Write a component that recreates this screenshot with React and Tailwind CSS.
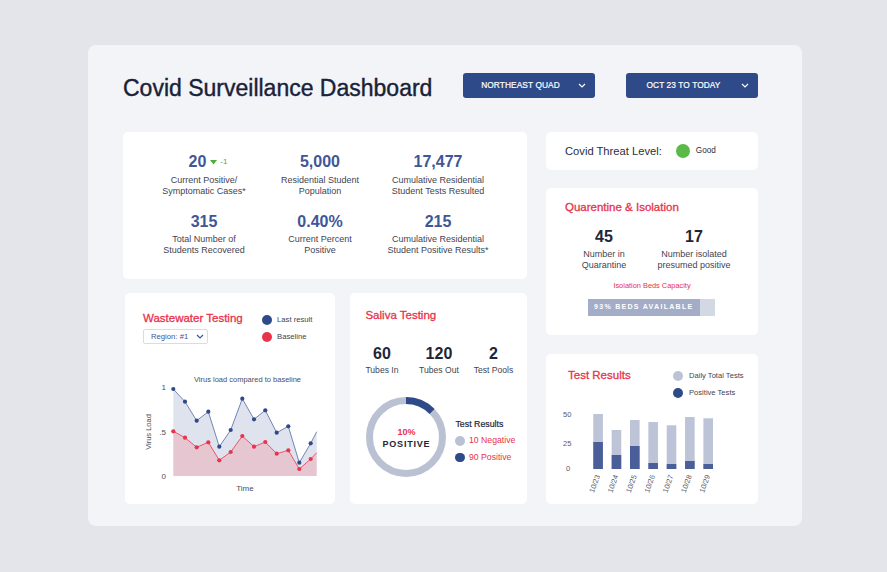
import React from 'react';

const BLUE = [
  [173.3, 389], [185, 401.7], [196.7, 420.7], [208.3, 411.7], [219.3, 446.7], [230.7, 430],
  [242.3, 398.7], [254, 419.3], [265.3, 410.3], [276.7, 432.7], [288.3, 426.3], [299.3, 462.7], [310.7, 443.3],
];
const RED = [
  [173.3, 431.3], [185, 437.7], [196.7, 447.3], [208.3, 442.3], [219.3, 460.3], [230.7, 452],
  [242.3, 436], [254, 446.7], [265.3, 442], [276.7, 453.7], [288.3, 450.3], [299.3, 469], [310.7, 459],
];
const BLUE_LINE = [...BLUE, [316.7, 431.7]];
const RED_LINE = [...RED, [316.7, 452.7]];

const BARS = [
  { d: '10/23', total: 414, pos: 442 },
  { d: '10/24', total: 430, pos: 455 },
  { d: '10/25', total: 420, pos: 446 },
  { d: '10/26', total: 422, pos: 463 },
  { d: '10/27', total: 425.3, pos: 464 },
  { d: '10/28', total: 417, pos: 461 },
  { d: '10/29', total: 418.3, pos: 464 },
];

const toPts = (a) => a.map((p) => p.join(',')).join(' ');

function Chevron({ className }) {
  return (
    <svg width="8" height="5" viewBox="0 0 8 5" className={className}>
      <polyline points="1,1 4,4 7,1" fill="none" stroke="currentColor" strokeWidth="1.2" />
    </svg>
  );
}

function SelectButton({ label }) {
  return (
    <div className="w-[132px] h-[25px] bg-[#2f4a89] rounded-[3px] flex items-center pr-[9px] text-white">
      <span className="flex-1 text-center text-[8.3px] tracking-[0.1px] [-webkit-text-stroke:0.2px_white]">{label}</span>
      <Chevron className="text-white" />
    </div>
  );
}

function Stat({ value, label, extra }) {
  return (
    <div className="flex flex-col items-center">
      <div className={`flex items-center h-[20px] ${extra ? 'pl-[8px]' : ''}`}>
        <span className="text-[16px] leading-[20px] font-bold text-[#3f5697]">{value}</span>
        {extra}
      </div>
      <div className="mt-[2.5px] text-[9px] leading-[11px] text-center text-[#3f4451] whitespace-pre-line">{label}</div>
    </div>
  );
}

function Card({ className, children }) {
  return <div className={`bg-white rounded-[5px] ${className}`}>{children}</div>;
}

// red card headings, drawn a touch heavier than regular
const HEAD = 'text-[11.5px] leading-[14px] text-[#e8334c] [-webkit-text-stroke:0.3px_#e8334c]';

function WastewaterChart() {
  const area = toPts([...BLUE_LINE, ...[...RED_LINE].reverse()]);
  const redArea = toPts([...RED_LINE, [316.7, 476], [173.3, 476]]);
  return (
    <svg width="190" height="125" viewBox="140 370 190 125">
      <text x="247.5" y="381.5" textAnchor="middle" fontSize="7.5" fill="#4a4f5c">Virus load compared to baseline</text>
      <polygon points={area} fill="#dfe3ee" />
      <polygon points={redArea} fill="#e6c6d0" />
      <polyline points={toPts(BLUE_LINE)} fill="none" stroke="#5468a3" strokeWidth="0.8" />
      <polyline points={toPts(RED_LINE)} fill="none" stroke="#e8334c" strokeWidth="0.8" />
      {BLUE.map(([x, y], i) => <circle key={'b' + i} cx={x} cy={y} r="2.1" fill="#2f4a89" />)}
      {RED.map(([x, y], i) => <circle key={'r' + i} cx={x} cy={y} r="2.1" fill="#e8334c" />)}
      <text x="166" y="390" textAnchor="end" fontSize="8" fill="#4a4f5c">1</text>
      <text x="166" y="435" textAnchor="end" fontSize="8" fill="#4a4f5c">.5</text>
      <text x="166" y="479" textAnchor="end" fontSize="8" fill="#4a4f5c">0</text>
      <text transform="translate(150.5 432) rotate(-90)" textAnchor="middle" fontSize="7.5" fill="#4a4f5c">Virus Load</text>
      <text x="245" y="491" textAnchor="middle" fontSize="8" fill="#4a4f5c">Time</text>
    </svg>
  );
}

function BarChart() {
  return (
    <svg width="170" height="95" viewBox="555 405 170 95">
      <text x="563" y="417" fontSize="7.5" fill="#55596a">50</text>
      <text x="563" y="445.5" fontSize="7.5" fill="#55596a">25</text>
      <text x="566" y="471" fontSize="7.5" fill="#55596a">0</text>
      {BARS.map((b, i) => {
        const x = 593.3 + i * 18.35;
        const cx = x + 4.8;
        return (
          <g key={b.d}>
            <rect x={x} y={b.total} width="9.6" height={469 - b.total} fill="#bdc4d8" />
            <rect x={x} y={b.pos} width="9.6" height={469 - b.pos} fill="#4a5e99" />
            <text
              x={cx + 2}
              y={476}
              textAnchor="end"
              fontSize="7.3"
              fill="#55596a"
              transform={`rotate(-70 ${cx + 2} 476)`}
            >
              {b.d}
            </text>
          </g>
        );
      })}
    </svg>
  );
}

export default function App() {
  return (
    <div className="w-[887px] h-[572px] bg-[#e4e5eb] pt-[45px] pl-[88px] font-['Liberation_Sans',Arial,sans-serif]">
      <div className="w-[714px] h-[481px] bg-[#f3f4f7] rounded-lg pl-[35px] pt-[28px]">
        {/* Header */}
        <div className="flex items-center h-[25px]">
          <h1 className="w-[340px] mt-[5px] text-[23px] leading-[28px] text-[#1a2238] [-webkit-text-stroke:0.4px_#1a2238]">
            Covid Surveillance Dashboard
          </h1>
          <SelectButton label="NORTHEAST QUAD" />
          <div className="w-[31px]" />
          <SelectButton label="OCT 23 TO TODAY" />
        </div>

        <div className="flex gap-[19px] mt-[34px]">
          {/* Left column */}
          <div className="w-[404px] flex flex-col gap-[14px]">
            <Card className="h-[147px] pt-[20px] pl-[24px]">
              <div className="grid grid-cols-[114px_118px_118px] gap-y-[15px]">
                <Stat
                  value="20"
                  label={'Current Positive/\nSymptomatic Cases*'}
                  extra={
                    <span className="flex items-center ml-[4px]">
                      <svg width="7" height="5" viewBox="0 0 7 5"><polygon points="0,0 7,0 3.5,4.5" fill="#4cae3c" /></svg>
                      <span className="ml-[3px] text-[8px] text-[#4cae3c]">-1</span>
                    </span>
                  }
                />
                <Stat value="5,000" label={'Residential Student\nPopulation'} />
                <Stat value="17,477" label={'Cumulative Residential\nStudent Tests Resulted'} />
                <Stat value="315" label={'Total Number of\nStudents Recovered'} />
                <Stat value="0.40%" label={'Current Percent\nPositive'} />
                <Stat value="215" label={'Cumulative Residential\nStudent Positive Results*'} />
              </div>
            </Card>

            <div className="flex gap-[15px] h-[211px]">
              {/* Wastewater */}
              <Card className="ml-[2px] w-[211px] h-[211px] pt-[18px]">
                <div className="flex pl-[18px] h-[34px]">
                  <div className="w-[119px]">
                    <div className={HEAD}>Wastewater Testing</div>
                    <div className="mt-[4px] w-[65px] h-[15px] border border-[#d8dce5] rounded-[2px] flex items-center pl-[7px] pr-[3px]">
                      <span className="flex-1 text-[7.7px] text-[#3f5697]">Region: #1</span>
                      <Chevron className="text-[#3f5697]" />
                    </div>
                  </div>
                  <div className="flex flex-col">
                    <div className="h-[17px] flex items-center gap-[5px]">
                      <span className="w-[10px] h-[10px] rounded-full bg-[#2f4a89]" />
                      <span className="text-[7.7px] text-[#3f4451]">Last result</span>
                    </div>
                    <div className="h-[17px] flex items-center gap-[5px]">
                      <span className="w-[10px] h-[10px] rounded-full bg-[#e8334c]" />
                      <span className="text-[7.7px] text-[#3f4451]">Baseline</span>
                    </div>
                  </div>
                </div>
                <div className="mt-[25px] pl-[15px]">
                  <WastewaterChart />
                </div>
              </Card>

              {/* Saliva */}
              <Card className="w-[177px] h-[211px] pt-[15px]">
                <div className={`pl-[15px] ${HEAD}`}>Saliva Testing</div>
                <div className="mt-[22px] pl-[3px] grid grid-cols-[57px_57px_52px]">
                  {[['60', 'Tubes In'], ['120', 'Tubes Out'], ['2', 'Test Pools']].map(([v, l]) => (
                    <div key={l} className="flex flex-col items-center">
                      <span className="text-[16px] leading-[20px] font-bold text-[#1f2537]">{v}</span>
                      <span className="text-[8.6px] leading-[11px] mt-[0.5px] text-[#3f4451]">{l}</span>
                    </div>
                  ))}
                </div>
                <div className="mt-[20.5px] pl-[15px] flex gap-[8px]">
                  <div className="relative w-[82px] h-[82px]">
                    <svg width="82" height="82" viewBox="0 0 82 82">
                      <circle cx="41" cy="41" r="36.5" fill="none" stroke="#b9c1d3" strokeWidth="7" />
                      <circle
                        cx="41"
                        cy="41"
                        r="36.5"
                        fill="none"
                        stroke="#2f4a89"
                        strokeWidth="7"
                        strokeDasharray="29 300"
                        transform="rotate(-90 41 41)"
                      />
                    </svg>
                    <div className="absolute inset-0 flex flex-col items-center justify-center pt-[1px]">
                      <span className="text-[9px] leading-[12px] font-bold text-[#e8334c]">10%</span>
                      <span className="text-[9px] leading-[12px] font-bold tracking-[0.8px] text-[#1f2537]">POSITIVE</span>
                    </div>
                  </div>
                  <div className="pt-[22px]">
                    <div className="text-[8.8px] leading-[12px] text-[#1f2537] [-webkit-text-stroke:0.2px_#1f2537]">Test Results</div>
                    <div className="mt-[4px] h-[14px] flex items-center gap-[4px]">
                      <span className="w-[9.5px] h-[9.5px] rounded-full bg-[#b9c1d3]" />
                      <span className="text-[8.7px] text-[#e8334c]">10 Negative</span>
                    </div>
                    <div className="mt-[2.5px] h-[14px] flex items-center gap-[4px]">
                      <span className="w-[9.5px] h-[9.5px] rounded-full bg-[#2f4a89]" />
                      <span className="text-[8.7px] text-[#e8334c]">90 Positive</span>
                    </div>
                  </div>
                </div>
              </Card>
            </div>
          </div>

          {/* Right column */}
          <div className="w-[212px] flex flex-col">
            <Card className="h-[38px] flex items-center pl-[19px]">
              <span className="text-[11.2px] text-[#2a2f3d]">Covid Threat Level:</span>
              <span className="ml-[14px] w-[14px] h-[14px] rounded-full bg-[#5bb947]" />
              <span className="ml-[6px] text-[8.2px] text-[#2a2f3d]">Good</span>
            </Card>

            <Card className="mt-[18px] h-[147px] pt-[12px]">
              <div className={`pl-[19px] ${HEAD}`}>Quarentine &amp; Isolation</div>
              <div className="mt-[13px] ml-[13px] flex">
                {[['45', 'Number in\nQuarantine'], ['17', 'Number isolated\npresumed positive']].map(([v, l]) => (
                  <div key={v} className="w-[90px] flex flex-col items-center">
                    <span className="text-[16px] leading-[20px] font-bold text-[#1f2537]">{v}</span>
                    <span className="mt-[1.5px] text-[9px] leading-[11px] text-center whitespace-pre-line text-[#3f4451]">{l}</span>
                  </div>
                ))}
              </div>
              <div className="mt-[10px] text-center text-[7.4px] leading-[10px] text-[#e8334c]">Isolation Beds Capacity</div>
              <div className="mt-[8px] ml-[42px] w-[127px] h-[17px] bg-[#d3d8e5] flex">
                <div className="w-[112px] h-full bg-[#a3adc7] flex items-center pl-[6px]">
                  <span className="text-[7px] font-bold tracking-[1.3px] text-white">93% BEDS AVAILABLE</span>
                </div>
              </div>
            </Card>

            <Card className="mt-[19px] h-[150px] pt-[13px]">
              <div className="flex h-[34px]">
                <div className={`w-[127px] pl-[22px] mt-[1px] ${HEAD}`}>Test Results</div>
                <div className="flex flex-col">
                  <div className="h-[17px] flex items-center gap-[6px]">
                    <span className="w-[10px] h-[10px] rounded-full bg-[#bcc3d6]" />
                    <span className="text-[7.6px] text-[#3f4451]">Daily Total Tests</span>
                  </div>
                  <div className="h-[17px] flex items-center gap-[6px]">
                    <span className="w-[10px] h-[10px] rounded-full bg-[#2f4a89]" />
                    <span className="text-[7.6px] text-[#3f4451]">Positive Tests</span>
                  </div>
                </div>
              </div>
              <div className="mt-[4px] pl-[9px]">
                <BarChart />
              </div>
            </Card>
          </div>
        </div>
      </div>
    </div>
  );
}
